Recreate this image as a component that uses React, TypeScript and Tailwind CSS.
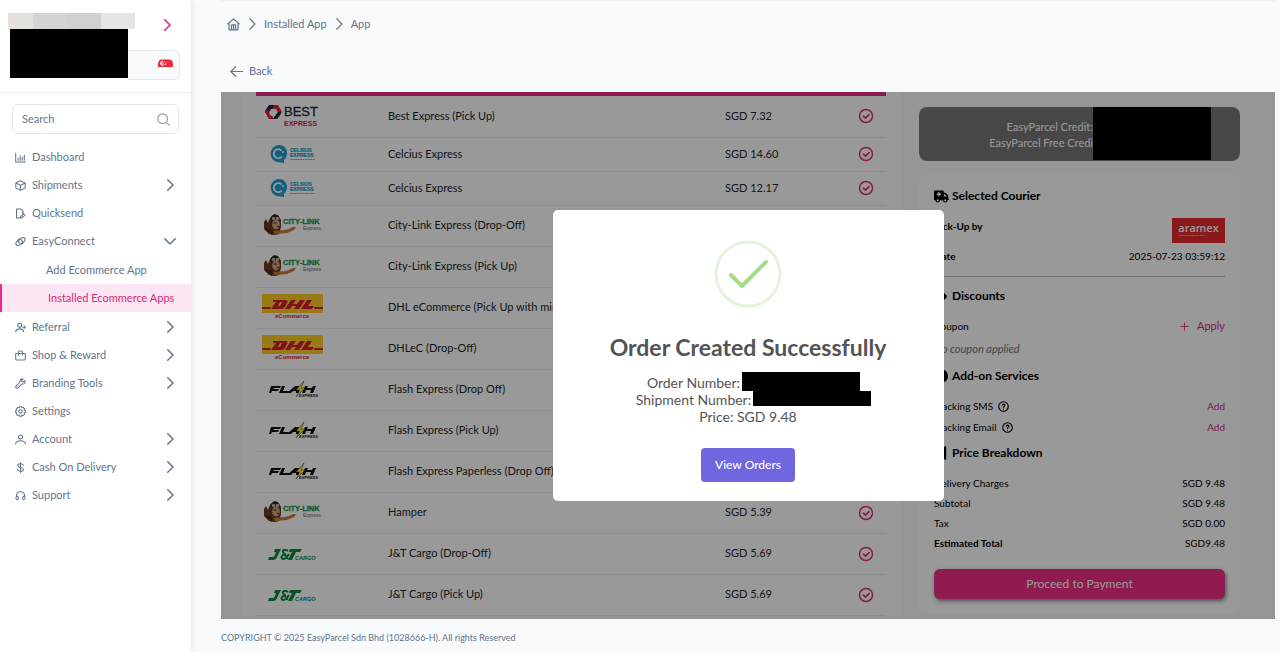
import type { ReactNode } from "react";
import { FaCircleInfo, FaReceipt, FaTag, FaTruckMedical } from "react-icons/fa6";

const iconPaths = {
  dashboard: "M1 2v12.500H15.500M4.500 12V9M7.500 12V5.500M10.500 12V7.500M13.500 12V4.500",
  box: "M8 1.200l6.800 3v7.600L8 14.800l-6.800-3V4.200zM1.200 4.400L8 7.600l6.800-3.200M8 7.600v7.200",
  quicksend: "M7.500 14.500H2.200V1.500h6.300l3.200 3v2M8.500 1.500l3.200 3M10.200 6.500l4.300 4.200-5.300 3.800-1.200-.5.5-2.200 3.200-2.300",
  link: "M6.200 9.800C4.600 8.400 5 6.600 6.600 5.200l2.600-2.200c3.400-2.400 7.200.8 4.800 4.200l-3 3.600c-1.200 1.300-2.800 1.300-3.800.3M9.800 6.200c1.600 1.400 1.200 3.200-.4 4.600L6.800 13c-3.400 2.400-7.200-.8-4.800-4.200l3-3.600c1.200-1.300 2.800-1.300 3.800-.3",
  referral: "M6.800 2a2.900 2.900 0 1 1 0 5.800 2.900 2.900 0 0 1 0-5.800M1 14c.6-3 2.800-4 5.800-4s5.200 1 5.800 4M13.500 5.500v4M11.500 7.500h4",
  bag: "M1 5h14v8.200c0 .8-.5 1.300-1.300 1.300H2.300C1.500 14.500 1 14 1 13.200zM5 7.500V3.500c0-1.200.9-2 2.200-2h1.600c1.300 0 2.200.8 2.200 2v4",
  wrench: "M14.300 3.700l-2.500 2-2-.2-.3-2 2.200-2.200C8.800.7 6.600 3 7.300 5.800l-5.600 5.700c-1.700 2 .8 4.500 2.800 2.800l5.700-5.600c3 .7 5.300-1.800 4.100-5M4 12h.1",
  gear: "M8 5.500a2.500 2.500 0 1 1 0 5 2.500 2.500 0 0 1 0-5M6.500 1h3l.5 1.700 1.800-.7 2.200 2.200-.7 1.700 1.700.6v3l-1.700.6.7 1.700-2.200 2.200-1.800-.7-.5 1.700h-3L6 13.300l-1.800.7L2 11.800l.7-1.700L1 9.500v-3l1.700-.6L2 4.200 4.200 2l1.800.7z",
  user: "M8 1.500A2.900 2.900 0 1 1 8 7.300a2.900 2.900 0 0 1 0-5.800M.8 14.500c.7-3.300 3.400-4.600 7.200-4.600s6.500 1.300 7.200 4.600",
  dollar: "M8 .8v14.400M12 4.700C11.700 3 10 2.500 8 2.500c-2.300 0-4 .9-4 2.700C4 9 12.200 7 12.200 10.800c0 1.800-1.700 2.700-4.200 2.700-2.300 0-4-.8-4.300-2.600",
  headphones: "M2 10C1.500 5 4 2.500 8 2.500s6.500 2.500 6 7.500M2 9.500c1.600-1 2.800.2 2.800 2.200 0 1.500-.8 2.400-1.800 2.300-1.700-.1-2.200-2.700-1-4.500M14 9.500c-1.600-1-2.800.2-2.800 2.200 0 1.500.8 2.400 1.800 2.300 1.700-.1 2.200-2.700 1-4.500",
  home: "M.8 7.200L8 1.200l7.200 6M2.500 6.500v8h11v-8M5.500 14.300V8.500h5v5.800M8 9v5.300",
  arrow: "M15.500 8H1M7 2L1 8l6 6",
  search: "M7 1a6 6 0 1 1 0 12A6 6 0 0 1 7 1M11.500 11.500L15.200 15",
  right: "M5 1L12 8l-7 7",
  down: "M1 5l7 7 7-7",
  plus: "M8 1.500v13M1.500 8h13",
};

type IconName = keyof typeof iconPaths;

function Icon({ name, className = "size-3" }: { name: IconName; className?: string }) {
  return (
    <svg viewBox="0 0 16 16" className={`shrink-0 ${className}`} fill="none" stroke="currentColor" strokeWidth="1.5" strokeLinecap="round" strokeLinejoin="round" aria-hidden="true">
      <path d={iconPaths[name]} />
    </svg>
  );
}

const mainMenu: { label: string; icon: IconName; arrow?: IconName }[] = [
  { label: "Dashboard", icon: "dashboard" },
  { label: "Shipments", icon: "box", arrow: "right" },
  { label: "Quicksend", icon: "quicksend" },
  { label: "EasyConnect", icon: "link", arrow: "down" },
];

const moreMenu: { label: string; icon: IconName; arrow?: IconName }[] = [
  { label: "Referral", icon: "referral", arrow: "right" },
  { label: "Shop & Reward", icon: "bag", arrow: "right" },
  { label: "Branding Tools", icon: "wrench", arrow: "right" },
  { label: "Settings", icon: "gear" },
  { label: "Account", icon: "user", arrow: "right" },
  { label: "Cash On Delivery", icon: "dollar", arrow: "right" },
  { label: "Support", icon: "headphones", arrow: "right" },
];

function MenuItem({ label, icon, arrow }: { label: string; icon: IconName; arrow?: IconName }) {
  return (
    <a href="#" className="flex h-7 items-center px-[15px]">
      <Icon name={icon} className="size-[11px]" />
      <span className="ml-[6px] flex-1">{label}</span>
      {arrow && <Icon name={arrow} className="size-3 stroke-2" />}
    </a>
  );
}

function Sidebar() {
  return (
    <aside className="z-10 flex w-[191px] shrink-0 flex-col bg-white shadow-[0_0_6px_rgba(0,0,0,0.12)]">
      <div className="h-[93px] border-b border-[#eceff2] pl-2 pt-[13px]">
        <div className="flex h-4">
          <span className="w-[25px] bg-[#e4e0dc]" />
          <span className="w-[34px] bg-[#d3d5d4]" />
          <span className="w-[34px] bg-[#cfd1d0]" />
          <span className="w-[34px] bg-[#e4e4e4]" />
          <button aria-label="Collapse menu" className="ml-[26px] mt-[6px] h-3 text-[#d6247f]">
            <Icon name="right" className="size-3 stroke-2" />
          </button>
        </div>
        <div className="ml-[2px] flex h-[51px]">
          <div className="h-[49px] w-[118px] bg-black" />
          <div className="mt-[21px] flex h-[30px] w-[52px] items-center justify-end rounded-r-md border border-l-0 border-[#e5e8ec] bg-[#f8fafc] pr-[6px]">
            <svg viewBox="0 0 15 15" className="size-[15px]" aria-hidden="true">
              <path d="M0 9V6.500Q0 1.500 4 1.500h7q4 0 4 5V9z" fill="#ed2939" />
              <path d="M0 9h15q-1 5-7.500 5T0 9" fill="#fff" />
              <path d="M5.500 2.800a2.500 2.500 0 1 0 0 4.800 2.900 2.900 0 0 1 0-4.800" fill="#fff" />
              <g fill="#fff">
                <circle cx="6.800" cy="3.800" r=".5" />
                <circle cx="5.700" cy="5" r=".5" />
                <circle cx="8" cy="5" r=".5" />
                <circle cx="6.200" cy="6.500" r=".5" />
                <circle cx="7.600" cy="6.500" r=".5" />
              </g>
            </svg>
          </div>
        </div>
      </div>
      <label className="mx-3 mt-[11px] flex h-[30px] items-center rounded-md border border-[#e2e6ea] pl-[9px] pr-2">
        <input type="text" aria-label="Search" placeholder="Search" className="min-w-0 flex-1 outline-none placeholder:text-[#64748b]" />
        <Icon name="search" className="size-[13px] text-[#94a3b8]" />
      </label>
      <nav className="mt-[9px]">
        {mainMenu.map((item) => <MenuItem key={item.label} {...item} />)}
        <div className="my-px">
          <a href="#" className="flex h-7 items-center pl-[46px]">Add Ecommerce App</a>
          <a href="#" className="flex h-7 items-center border-l-2 border-[#ec2a8b] bg-[#fde6f3] pl-[46px] text-[#db2777]">
            Installed Ecommerce Apps
          </a>
        </div>
        {moreMenu.map((item) => <MenuItem key={item.label} {...item} />)}
      </nav>
    </aside>
  );
}

/* courier logos, all on the same 64x34 canvas */

function BestLogo() {
  return (
    <svg viewBox="0 0 64 34" className="h-[34px] w-16">
      <path d="M3 12l4-6h6l-3 5-2 4-2 3z" fill="#14274e" />
      <path d="M13 6h3l4 7-3 5-4-7-2-1z" fill="#e01b2e" />
      <path d="M3 13l4 7h5l-3-5-3-5z" fill="#e01b2e" />
      <path d="M11 20l4-7 4 0-3 6-1 1z" fill="#14274e" />
      <path d="M9 10h5l2 3-3 4H9l-2-3z" fill="#fff" />
      <text x="22" y="17" fill="#1b2a49" stroke="#1b2a49" strokeWidth=".3" className="font-['Liberation_Sans'] text-[13px]">BEST</text>
      <text x="22" y="27" fill="#e01b2e" className="font-['Liberation_Sans'] text-[7px] font-bold">EXPRESS</text>
    </svg>
  );
}

function CelsiusLogo() {
  return (
    <svg viewBox="0 0 64 34" className="h-[34px] w-16">
      <path d="M16 8a8.700 8.700 0 0 0-1 17c3 .3 4 .5 7 1v-3c2-2 3-4 3-7 0-5-4-8.500-9-8" fill="#209fd0" />
      <path d="M19.500 13.500a4.500 4.500 0 1 0 .3 6" fill="none" stroke="#fff" strokeWidth="1.800" />
      <circle cx="21" cy="15" r="1" fill="#fff" />
      <text x="28" y="15" fill="#209fd0" stroke="#209fd0" strokeWidth=".2" className="font-['Liberation_Sans'] text-[5px] font-bold">CELSIUS</text>
      <text x="28" y="20" fill="#209fd0" stroke="#209fd0" strokeWidth=".2" className="font-['Liberation_Sans'] text-[5px] font-bold">EXPRESS</text>
      <path d="M28 22.500h25" stroke="#62b8d8" strokeWidth="1.200" strokeDasharray="2 .5" />
    </svg>
  );
}

function CityLinkLogo() {
  return (
    <svg viewBox="0 0 64 34" className="h-[34px] w-16">
      <path d="M2 13l2-3 2 4 2-5 4-4 4 1 3 5v7l-2 7-4 1-6-1-5-5z" fill="#6b371f" />
      <path d="M8 11c1-7 9-7 10 0l-5 1z" fill="#2f1d17" />
      <ellipse cx="14" cy="15.500" rx="3.800" ry="5" fill="#d9a679" />
      <circle cx="11.500" cy="9.500" r="1.800" fill="#b5b8b9" />
      <circle cx="15.500" cy="9.500" r="1.800" fill="#b5b8b9" />
      <path d="M11.500 14h3M15 17l2 1" stroke="#3a1d14" />
      <path d="M11 22c9-1 13 0 20-4l3 0-2 3-7 3-12 1z" fill="#c97c35" />
      <path d="M8 20l2 6M4 19l3 4" stroke="#2f1510" />
      <text x="21" y="15" fill="#16964f" stroke="#16964f" strokeWidth=".3" className="font-['Liberation_Sans'] text-[7.500px] font-bold">CITY-LINK</text>
      <text x="41" y="20.500" fill="#666" className="font-['Liberation_Sans'] text-[5px]">Express</text>
    </svg>
  );
}

function DhlLogo() {
  return (
    <svg viewBox="0 0 64 34" className="h-[34px] w-16">
      <path d="M0 3h61v19H0z" fill="#fecc26" />
      <path d="M0 16h9l-1 2H0zM52 16h9v2h-9z" fill="#d51f32" />
      <path d="M11 9h12q4 0 2 3l-2 4q-1 2-4 2H9l5-7h4l-2 4h2l2-4h-9zM29 9h5l-3 4h4l3-4h5l-6 9h-5l2-3h-4l-2 3h-5zM45 9h5l-4 6h6l-2 3H39z" fill="#d51f32" />
      <text x="13" y="27" fill="#d51f32" className="font-['Liberation_Sans'] text-[6px] font-bold">eCommerce</text>
    </svg>
  );
}

function FlashLogo() {
  return (
    <svg viewBox="0 0 64 34" className="h-[34px] w-16">
      <path d="M9 13h10l-1 2h-6l-1 1h6l-1 2h-6l-1 2H7zM20 13h3l-2 5h6l-1 2h-9zM33 13h4v7h-3v-2h-3l-2 2h-4zM43 13h3l-1 2h5l1-2h3l-3 7h-3l1-3h-5l-1 3h-3z" fill="#111" />
      <path d="M42 8l-8 9h4l-4 7 9-9h-4z" fill="#ffed23" stroke="#333" strokeWidth=".5" />
      <text x="37" y="24" fill="#111" className="font-['Liberation_Sans'] text-[4px] font-bold italic">EXPRESS</text>
    </svg>
  );
}

function JtLogo() {
  return (
    <svg viewBox="0 0 64 34" className="h-[34px] w-16">
      <path d="M13 12h6l-4 8q-1 3-4 3H6l1-3h4q1 0 2-2l1-3h-2zM28 12h12l-2 3h-4l-4 8h-4l4-8h-3z" fill="#078b40" />
      <path d="M26 14q-1-1-3-1-3 0-2 2l5 7M27 17q-3 5-6 5-3-1 0-4l3-1" fill="none" stroke="#078b40" strokeWidth="2" />
      <text x="33" y="23" fill="#078b40" className="font-['Liberation_Sans'] text-[5.500px] font-bold italic">CARGO</text>
    </svg>
  );
}

const couriers = [
  { Logo: BestLogo, name: "Best Express (Pick Up)", price: "SGD 7.32" },
  { Logo: CelsiusLogo, name: "Celcius Express", price: "SGD 14.60", compact: true },
  { Logo: CelsiusLogo, name: "Celcius Express", price: "SGD 12.17", compact: true },
  { Logo: CityLinkLogo, name: "City-Link Express (Drop-Off)" },
  { Logo: CityLinkLogo, name: "City-Link Express (Pick Up)" },
  { Logo: DhlLogo, name: "DHL eCommerce (Pick Up with min" },
  { Logo: DhlLogo, name: "DHLeC (Drop-Off)" },
  { Logo: FlashLogo, name: "Flash Express (Drop Off)" },
  { Logo: FlashLogo, name: "Flash Express (Pick Up)" },
  { Logo: FlashLogo, name: "Flash Express Paperless (Drop Off)" },
  { Logo: CityLinkLogo, name: "Hamper", price: "SGD 5.39" },
  { Logo: JtLogo, name: "J&T Cargo (Drop-Off)", price: "SGD 5.69" },
  { Logo: JtLogo, name: "J&T Cargo (Pick Up)", price: "SGD 5.69" },
];

function CourierTable() {
  return (
    <div className="ml-5 min-w-0 flex-1 bg-white px-[15px]">
      <div className="h-1 bg-[#ec2a8b]" />
      <table className="w-full table-fixed text-[#212529]">
        <colgroup>
          <col className="w-[132px]" />
          <col />
          <col className="w-[120px]" />
          <col className="w-[41px]" />
        </colgroup>
        <tbody>
          {couriers.map(({ Logo, name, price, compact }, i) => (
            <tr key={i} className={`border-b border-[#e9ebee] ${compact ? "h-[34px]" : "h-[41px]"}`}>
              <td className="pl-[6px]">
                <div className="flex h-[33px] items-center"><Logo /></div>
              </td>
              <td className="whitespace-nowrap">{name}</td>
              <td>{price}</td>
              <td>
                <button aria-label={`Select ${name}`} className="mx-auto block text-[#e2307f]">
                  <svg viewBox="0 0 16 16" className="size-4" fill="none" stroke="currentColor" strokeWidth="1.500" strokeLinecap="round" strokeLinejoin="round">
                    <circle cx="8" cy="8" r="6.500" />
                    <path d="M5.500 8.200l2 2 3.500-3.500" strokeWidth="1.700" />
                  </svg>
                </button>
              </td>
            </tr>
          ))}
        </tbody>
      </table>
    </div>
  );
}

function Heading({ icon, children }: { icon: ReactNode; children: ReactNode }) {
  return (
    <h2 className="flex h-5 items-center gap-1 text-xs font-bold">
      <span className="flex w-[14px] justify-center">{icon}</span>
      {children}
    </h2>
  );
}

function PriceRow({ label, value, bold }: { label: string; value: string; bold?: boolean }) {
  return (
    <div className="flex h-4 items-center justify-between">
      <dt className={bold ? "font-bold" : ""}>{label}</dt>
      <dd>{value}</dd>
    </div>
  );
}

function Help() {
  return (
    <svg viewBox="0 0 12 12" className="size-[11px]" fill="none" stroke="currentColor" strokeWidth="1.200" strokeLinecap="round" aria-hidden="true">
      <circle cx="6" cy="6" r="5.200" />
      <path d="M4.600 4.700c.2-1.800 3-1.600 2.900 0C7.400 5.800 6 5.700 6 6.900M6 8.700v.1" />
    </svg>
  );
}

function OrderSummary() {
  return (
    <div className="ml-[18px] mr-[35px] flex w-[321px] shrink-0 flex-col pt-[15px] text-[10px] leading-4 text-black">
      <div className="flex h-[54px] rounded-lg bg-[#777] text-white">
        <div className="flex flex-1 flex-col justify-center pt-px text-right text-[11px]">
          <p>EasyParcel Credit:</p>
          <p>EasyParcel Free Credi</p>
        </div>
        <div className="relative z-20 mr-[29px] h-[53px] w-[118px] bg-black" />
      </div>

      <section className="mt-[13px] rounded-lg bg-white px-[15px] pb-[15px] pt-3">
        <Heading icon={<FaTruckMedical className="size-[15px] shrink-0" />}>Selected Courier</Heading>
        <div className="mt-3 flex h-[26px] justify-between">
          <span className="font-bold">Pick-Up by</span>
          <svg viewBox="0 0 53 25" className="h-[25px] w-[53px]">
            <path d="M0 0h53v25H0z" fill="#e42a2c" />
            <text x="26.500" y="14" fill="#fff" textAnchor="middle" className="font-['Open_Sans'] text-[11px] font-semibold">aramex</text>
            <path d="M7 17.500h26" stroke="#f2a9a9" strokeWidth=".8" strokeDasharray="2 .6" />
          </svg>
        </div>
        <div className="mt-1 flex justify-between">
          <span className="font-bold">Date</span>
          <span>2025-07-23 03:59:12</span>
        </div>
        <hr className="mt-3 border-[#b5b8bb]" />

        <div className="mt-[9px]">
          <Heading icon={<FaTag className="size-[14px]" />}>Discounts</Heading>
        </div>
        <div className="mt-3 flex h-4 items-center justify-between">
          <span>Coupon</span>
          <button className="flex items-center gap-2 text-[11px] text-[#d6297f]">
            <Icon name="plus" className="size-[9px]" />
            Apply
          </button>
        </div>
        <p className="mt-[7px] h-4 text-[11px] italic text-[#6c757d]">No coupon applied</p>

        <div className="mt-[9px]">
          <Heading icon={<FaCircleInfo className="size-[14px]" />}>Add-on Services</Heading>
        </div>
        <div className="mt-3 flex flex-col gap-[5px]">
          {["Tracking SMS", "Tracking Email"].map((service) => (
            <div key={service} className="flex h-4 items-center gap-[5px]">
              {service}
              <Help />
              <button className="ml-auto text-[#d6297f]">Add</button>
            </div>
          ))}
        </div>

        <div className="mt-2">
          <Heading icon={<FaReceipt className="size-[14px]" />}>Price Breakdown</Heading>
        </div>
        <dl className="mt-3 flex flex-col gap-1">
          <PriceRow label="Delivery Charges" value="SGD 9.48" />
          <PriceRow label="Subtotal" value="SGD 9.48" />
          <PriceRow label="Tax" value="SGD 0.00" />
          <PriceRow label="Estimated Total" value="SGD9.48" bold />
        </dl>
        <button className="mt-[18px] h-[30px] w-full rounded-md bg-[#ee2d88] pb-px text-xs text-white shadow-[1px_2px_4px_rgba(0,0,0,0.5)]">
          Proceed to Payment
        </button>
      </section>
    </div>
  );
}

function SuccessDialog() {
  return (
    <div role="dialog" aria-labelledby="dialog-title" className="flex w-[391px] flex-col items-center rounded-[5px] bg-white pb-[19px] pt-[30px] text-[#545454]">
      <svg viewBox="0 0 68 68" className="size-[68px]" fill="none" strokeLinecap="round" strokeLinejoin="round" aria-hidden="true">
        <circle cx="34" cy="34" r="32" stroke="#e4f4dc" strokeWidth="3" />
        <path d="M17 35l11 11 24-24" stroke="#a5dc86" strokeWidth="4" />
      </svg>
      <h1 id="dialog-title" className="mt-6 text-[23px] leading-[30px] font-bold">Order Created Successfully</h1>
      <div className="mt-3 text-sm leading-[17px]">
        <p className="-mr-[11px] flex h-[17px] items-end justify-center gap-[2px]">
          Order Number:
          <span className="h-[19px] w-[118px] bg-black" />
        </p>
        <p className="-mr-[11px] flex h-[17px] justify-center gap-[2px]">
          Shipment Number:
          <span className="h-[15px] w-[118px] bg-black" />
        </p>
        <p className="text-center">Price: SGD 9.48</p>
      </div>
      <button className="mt-[23px] h-[34px] rounded bg-[#7066e0] px-[14px] text-xs font-medium text-white">View Orders</button>
    </div>
  );
}

export default function App() {
  return (
    <div className="flex h-screen min-w-[1100px] bg-[#f8fafc] font-[Lato,sans-serif] text-[11px] text-[#64748b]">
      <Sidebar />
      <main className="ml-[30px] mr-[5px] flex min-w-0 flex-1 flex-col border-t border-[#eef1f4]">
        <nav aria-label="Breadcrumb" className="mt-[15px] flex h-4 items-center pl-[6px]">
          <a href="#" aria-label="Home"><Icon name="home" className="size-[13px]" /></a>
          <Icon name="right" className="mx-[6px] size-3" />
          <a href="#">Installed App</a>
          <Icon name="right" className="mx-[6px] size-3" />
          <a href="#">App</a>
        </nav>
        <a href="#" className="mb-[13px] mt-[31px] flex h-4 items-center gap-[6px] self-start pl-[9px]">
          <Icon name="arrow" className="size-[13px]" />
          Back
        </a>
        <div className="relative min-h-0 flex-1 overflow-hidden">
          <div className="flex">
            <CourierTable />
            <OrderSummary />
          </div>
          <div className="absolute inset-0 z-10 flex items-center justify-center bg-black/40">
            <SuccessDialog />
          </div>
        </div>
        <footer className="flex h-[33px] items-center pt-1 text-[9px]">
          COPYRIGHT © 2025 EasyParcel Sdn Bhd (1028666-H). All rights Reserved
        </footer>
      </main>
    </div>
  );
}
